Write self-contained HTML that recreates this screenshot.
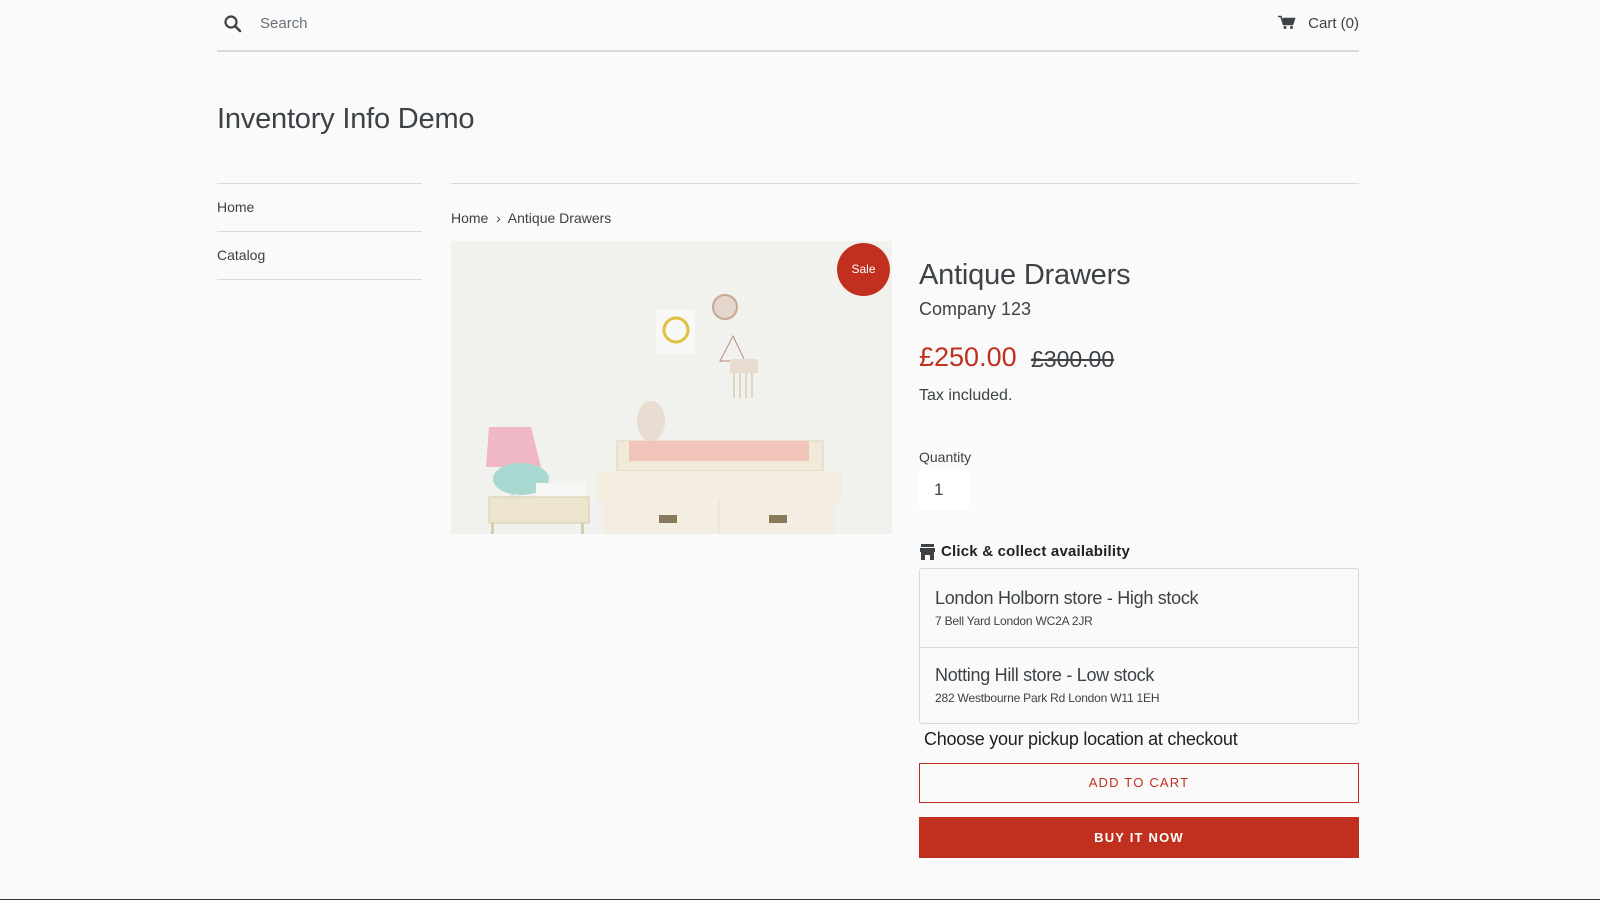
<!DOCTYPE html>
<html><head><meta charset="utf-8"><style>
*{margin:0;padding:0;box-sizing:border-box}
html,body{width:1600px;height:900px;background:#fafafa;overflow:hidden;font-family:"Liberation Sans",sans-serif;color:#3d4246;position:relative}
.a{position:absolute;white-space:nowrap}
.line{position:absolute;height:1px;background:#d9d9d9}
</style></head><body>
<svg class="a" style="left:223px;top:14px" width="20" height="20" viewBox="0 0 20 20"><circle cx="8" cy="8" r="5.5" fill="none" stroke="#3d4246" stroke-width="2.2"/><path d="M12 12 L17 17" stroke="#3d4246" stroke-width="2.6" stroke-linecap="round"/></svg>
<div class="a" style="left:260px;top:15px;font-size:15px;color:#69727b">Search</div>
<svg class="a" style="left:1278px;top:15px" width="18" height="15" viewBox="0 0 18 15"><path d="M0 1.5h3l2.5 8h9l2-6H5" fill="none" stroke="#3d4246" stroke-width="1.6"/><path d="M4.5 3.5h12l-2 6h-9z" fill="#3d4246"/><circle cx="7" cy="12.5" r="1.5" fill="#3d4246"/><circle cx="13.5" cy="12.5" r="1.5" fill="#3d4246"/></svg>
<div class="a" style="right:241px;top:15px;font-size:15px">Cart (0)</div>
<div class="line" style="left:217px;top:50px;width:1142px;height:2px"></div>
<div class="a" style="left:217px;top:103px;font-size:29px;letter-spacing:-0.2px">Inventory Info Demo</div>
<div class="line" style="left:217px;top:183px;width:205px"></div>
<div class="line" style="left:217px;top:231px;width:205px"></div>
<div class="line" style="left:217px;top:279px;width:205px"></div>
<div class="a" style="left:217px;top:199px;font-size:14px">Home</div>
<div class="a" style="left:217px;top:247px;font-size:14px">Catalog</div>
<div class="line" style="left:451px;top:183px;width:908px"></div>
<div class="a" style="left:451px;top:210px;font-size:14px;color:#3d4246">Home &nbsp;›&nbsp; Antique Drawers</div>
<svg class="a" style="left:451px;top:241px" width="441" height="293" viewBox="0 0 441 293">
<rect width="441" height="293" fill="#f1f1ee"/>
<rect x="205" y="68" width="39" height="45" fill="#f8f8f6"/><circle cx="225" cy="89" r="12" fill="none" stroke="#e0c040" stroke-width="3"/>
<circle cx="274" cy="66" r="12" fill="#e4d6cc" stroke="#c8a890" stroke-width="2"/>
<path d="M282 95l12 25h-25z" fill="none" stroke="#b89080"/><rect x="279" y="118" width="28" height="14" fill="#e8dcd0"/><path d="M283 132v25M289 132v25M295 132v25M301 132v25" stroke="#e0d4c4" stroke-width="2"/>
<path d="M38 186h42l10 40H35z" fill="#f0b8c4"/><rect x="60" y="226" width="3" height="40" fill="#ddd"/>
<ellipse cx="70" cy="238" rx="28" ry="16" fill="#a8d8d0"/><rect x="85" y="242" width="50" height="20" fill="#f6f6f4"/>
<rect x="38" y="256" width="100" height="26" fill="#ece4cc" stroke="#d8ccb0"/><rect x="40" y="282" width="3" height="11" fill="#d8ccb0"/><rect x="130" y="282" width="3" height="11" fill="#d8ccb0"/>
<ellipse cx="200" cy="180" rx="14" ry="20" fill="#e8ddd0"/>
<rect x="166" y="200" width="206" height="30" fill="#f2ead8" stroke="#ddd2bc"/><rect x="178" y="200" width="180" height="20" fill="#f0c4b8"/>
<rect x="145" y="230" width="246" height="30" fill="#f4eee0"/><rect x="152" y="260" width="232" height="33" fill="#f4eee2"/><path d="M268 260v33" stroke="#ddd"/>
<rect x="208" y="274" width="18" height="8" fill="#8a7a5c"/><rect x="318" y="274" width="18" height="8" fill="#8a7a5c"/>
</svg>
<div class="a" style="left:837px;top:243px;width:53px;height:53px;border-radius:50%;background:#c1301f;color:#fff;font-size:12px;text-align:center;line-height:53px">Sale</div>
<div class="a" style="left:919px;top:259px;font-size:29px;letter-spacing:-0.2px">Antique Drawers</div>
<div class="a" style="left:919px;top:299px;font-size:18px">Company 123</div>
<div class="a" style="left:919px;top:342px;font-size:27px;color:#c1301f">£250.00</div>
<div class="a" style="left:1031px;top:346px;font-size:23px;text-decoration:line-through">£300.00</div>
<div class="a" style="left:919px;top:387px;font-size:16px">Tax included.</div>
<div class="a" style="left:919px;top:449px;font-size:14px">Quantity</div>
<div class="a" style="left:919px;top:469px;width:50px;height:41px;background:#fff;font-size:17px;padding:11px 0 0 15px">1</div>
<svg class="a" style="left:920px;top:544px" width="15" height="16" viewBox="0 0 15 16"><rect x="1" y="0" width="13" height="3" fill="#3d4246"/><rect x="0" y="4" width="15" height="4" fill="#3d4246"/><path d="M1 8h13v8h-4v-5H5v5H1z" fill="#3d4246"/></svg>
<div class="a" style="left:941px;top:543px;font-size:15px;font-weight:bold;color:#222;letter-spacing:0.2px">Click &amp; collect availability</div>
<div class="a" style="left:919px;top:568px;width:440px;height:156px;border:1px solid #d9d9d9;border-radius:3px;background:#fafafa"></div>
<div class="line" style="left:920px;top:647px;width:438px"></div>
<div class="a" style="left:935px;top:588px;font-size:18px;letter-spacing:-0.3px">London Holborn store - High stock</div>
<div class="a" style="left:935px;top:614px;font-size:12px;letter-spacing:-0.2px">7 Bell Yard London WC2A 2JR</div>
<div class="a" style="left:935px;top:665px;font-size:18px;letter-spacing:-0.3px">Notting Hill store - Low stock</div>
<div class="a" style="left:935px;top:691px;font-size:12px;letter-spacing:-0.2px">282 Westbourne Park Rd London W11 1EH</div>
<div class="a" style="left:924px;top:729px;font-size:18px;color:#222;letter-spacing:-0.25px">Choose your pickup location at checkout</div>
<div class="a" style="left:919px;top:763px;width:440px;height:40px;border:1px solid #c1301f;color:#c1301f;font-size:13px;letter-spacing:1.2px;text-align:center;line-height:38px">ADD TO CART</div>
<div class="a" style="left:919px;top:817px;width:440px;height:41px;background:#c1301f;color:#fff;font-size:13px;font-weight:bold;letter-spacing:1.2px;text-align:center;line-height:41px">BUY IT NOW</div>
<div class="a" style="left:0;top:899px;width:1600px;height:1px;background:#333"></div>
</body></html>
